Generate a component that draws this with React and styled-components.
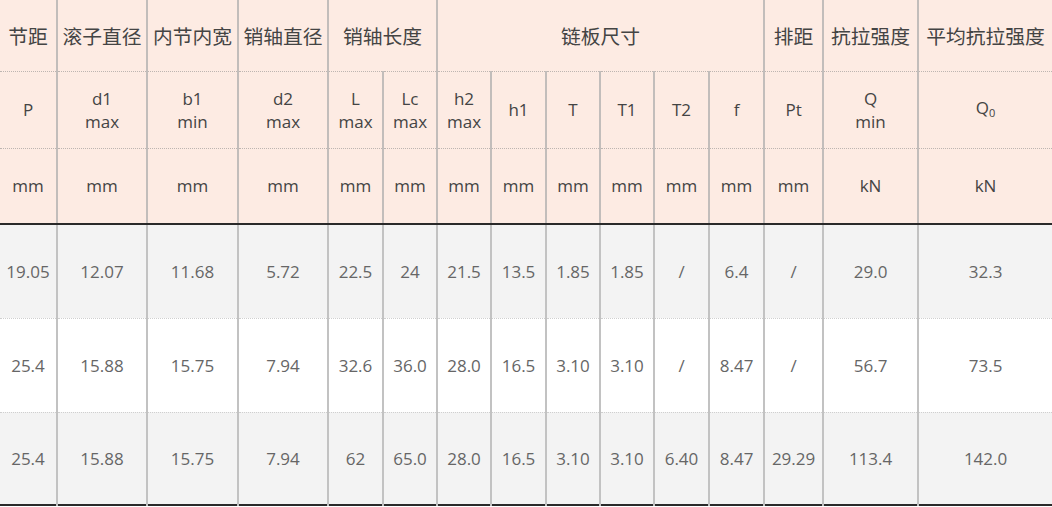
import React from "react";
import styled, { createGlobalStyle } from "styled-components";

const Global = createGlobalStyle`
  html, body { margin: 0; padding: 0; background: #ffffff; }
  body { font-family: "Open Sans", "Noto Sans CJK SC", sans-serif; }
`;

const Table = styled.table`
  width: 1052px;
  border-collapse: collapse;
  table-layout: fixed;
  font-family: "Open Sans", "Noto Sans CJK SC", sans-serif;
  font-size: 17px;
  border-bottom: 2px solid #2a2a2a;
`;

const HeadRow = styled.tr`
  height: ${(p) => p.$h}px;
  background: #fdebe3;
`;

const HeadCell = styled.th`
  font-weight: 400;
  color: #444;
  text-align: center;
  vertical-align: middle;
  padding: 0;
  line-height: 23px;
  border-left: 2px solid #c2bdbb;
  border-bottom: ${(p) => (p.$last ? "2px solid #2a2a2a" : "1px dotted #bdb5b1")};
  font-size: ${(p) => (p.$cjk ? "19.8px" : "17px")};
  font-family: ${(p) =>
    p.$cjk ? '"Noto Sans CJK SC", sans-serif' : '"Open Sans", "Noto Sans CJK SC", sans-serif'};
  white-space: nowrap;
  &:first-child { border-left: none; }
`;

const BodyRow = styled.tr`
  height: ${(p) => p.$h}px;
  background: ${(p) => (p.$alt ? "#ffffff" : "#f3f3f3")};
`;

const BodyCell = styled.td`
  color: #666;
  text-align: center;
  vertical-align: middle;
  padding: 0;
  border-left: 2px solid #c2c2c2;
  border-top: 1px dotted #cfcfcf;
  white-space: nowrap;
  &:first-child { border-left: none; }
`;

const Sub = styled.sub`
  font-size: 11px;
  vertical-align: -3px;
`;

const widths = [57, 90, 91, 90, 55, 54, 54, 55, 54, 54, 55, 55, 59, 95, 134];

const row2 = [
  ["P"], ["d1", "max"], ["b1", "min"], ["d2", "max"], ["L", "max"], ["Lc", "max"],
  ["h2", "max"], ["h1"], ["T"], ["T1"], ["T2"], ["f"], ["Pt"], ["Q", "min"], ["Q0"],
];

const units = ["mm", "mm", "mm", "mm", "mm", "mm", "mm", "mm", "mm", "mm", "mm", "mm", "mm", "kN", "kN"];

const data = [
  ["19.05", "12.07", "11.68", "5.72", "22.5", "24", "21.5", "13.5", "1.85", "1.85", "/", "6.4", "/", "29.0", "32.3"],
  ["25.4", "15.88", "15.75", "7.94", "32.6", "36.0", "28.0", "16.5", "3.10", "3.10", "/", "8.47", "/", "56.7", "73.5"],
  ["25.4", "15.88", "15.75", "7.94", "62", "65.0", "28.0", "16.5", "3.10", "3.10", "6.40", "8.47", "29.29", "113.4", "142.0"],
];

const bodyHeights = [94, 94, 93];

function Symbol({ lines }) {
  if (lines[0] === "Q0") {
    return (
      <>
        Q<Sub>0</Sub>
      </>
    );
  }
  return lines.map((l, i) => (
    <React.Fragment key={i}>
      {i > 0 && <br />}
      {l}
    </React.Fragment>
  ));
}

export default function App() {
  return (
    <>
      <Global />
      <Table>
        <colgroup>
          {widths.map((w, i) => (
            <col key={i} style={{ width: w }} />
          ))}
        </colgroup>
        <thead>
          <HeadRow $h={71}>
            <HeadCell $cjk>节距</HeadCell>
            <HeadCell $cjk>滚子直径</HeadCell>
            <HeadCell $cjk>内节内宽</HeadCell>
            <HeadCell $cjk>销轴直径</HeadCell>
            <HeadCell $cjk colSpan={2}>销轴长度</HeadCell>
            <HeadCell $cjk colSpan={6}>链板尺寸</HeadCell>
            <HeadCell $cjk>排距</HeadCell>
            <HeadCell $cjk>抗拉强度</HeadCell>
            <HeadCell $cjk>平均抗拉强度</HeadCell>
          </HeadRow>
          <HeadRow $h={77}>
            {row2.map((lines, i) => (
              <HeadCell key={i}>
                <Symbol lines={lines} />
              </HeadCell>
            ))}
          </HeadRow>
          <HeadRow $h={76}>
            {units.map((u, i) => (
              <HeadCell key={i} $last>
                {u}
              </HeadCell>
            ))}
          </HeadRow>
        </thead>
        <tbody>
          {data.map((r, ri) => (
            <BodyRow key={ri} $h={bodyHeights[ri]} $alt={ri === 1}>
              {r.map((v, ci) => (
                <BodyCell key={ci}>{v}</BodyCell>
              ))}
            </BodyRow>
          ))}
        </tbody>
      </Table>
    </>
  );
}
